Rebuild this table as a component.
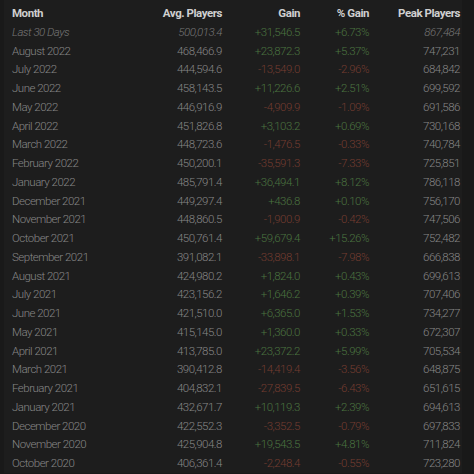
type Row = {
    month: string;
    avg: string;
    gain: string;
    pct: string;
    peak: string;
};

const rows: Row[] = [
    { month: "Last 30 Days", avg: "500,013.4", gain: "+31,546.5", pct: "+6.73%", peak: "867,484" },
    { month: "August 2022", avg: "468,466.9", gain: "+23,872.3", pct: "+5.37%", peak: "747,231" },
    { month: "July 2022", avg: "444,594.6", gain: "-13,549.0", pct: "-2.96%", peak: "684,842" },
    { month: "June 2022", avg: "458,143.5", gain: "+11,226.6", pct: "+2.51%", peak: "699,592" },
    { month: "May 2022", avg: "446,916.9", gain: "-4,909.9", pct: "-1.09%", peak: "691,586" },
    { month: "April 2022", avg: "451,826.8", gain: "+3,103.2", pct: "+0.69%", peak: "730,168" },
    { month: "March 2022", avg: "448,723.6", gain: "-1,476.5", pct: "-0.33%", peak: "740,784" },
    { month: "February 2022", avg: "450,200.1", gain: "-35,591.3", pct: "-7.33%", peak: "725,851" },
    { month: "January 2022", avg: "485,791.4", gain: "+36,494.1", pct: "+8.12%", peak: "786,118" },
    { month: "December 2021", avg: "449,297.4", gain: "+436.8", pct: "+0.10%", peak: "756,170" },
    { month: "November 2021", avg: "448,860.5", gain: "-1,900.9", pct: "-0.42%", peak: "747,506" },
    { month: "October 2021", avg: "450,761.4", gain: "+59,679.4", pct: "+15.26%", peak: "752,482" },
    { month: "September 2021", avg: "391,082.1", gain: "-33,898.1", pct: "-7.98%", peak: "666,838" },
    { month: "August 2021", avg: "424,980.2", gain: "+1,824.0", pct: "+0.43%", peak: "699,613" },
    { month: "July 2021", avg: "423,156.2", gain: "+1,646.2", pct: "+0.39%", peak: "707,406" },
    { month: "June 2021", avg: "421,510.0", gain: "+6,365.0", pct: "+1.53%", peak: "734,277" },
    { month: "May 2021", avg: "415,145.0", gain: "+1,360.0", pct: "+0.33%", peak: "672,307" },
    { month: "April 2021", avg: "413,785.0", gain: "+23,372.2", pct: "+5.99%", peak: "705,534" },
    { month: "March 2021", avg: "390,412.8", gain: "-14,419.4", pct: "-3.56%", peak: "648,875" },
    { month: "February 2021", avg: "404,832.1", gain: "-27,839.5", pct: "-6.43%", peak: "651,615" },
    { month: "January 2021", avg: "432,671.7", gain: "+10,119.3", pct: "+2.39%", peak: "694,613" },
    { month: "December 2020", avg: "422,552.3", gain: "-3,352.5", pct: "-0.79%", peak: "697,833" },
    { month: "November 2020", avg: "425,904.8", gain: "+19,543.5", pct: "+4.81%", peak: "711,824" },
    { month: "October 2020", avg: "406,361.4", gain: "-2,248.4", pct: "-0.55%", peak: "723,280" },
];

const cols = "grid grid-cols-[140px_70px_78px_69px_91px] items-center";

const App = () => {
    return (
        <div className="h-[474px] w-[474px] overflow-hidden bg-[#191919] font-['Roboto',sans-serif]">
            <div className="ml-[4px] w-[458px] bg-[#1d1d1d] pl-[8px] pt-[4px]">
                {/* header */}
                <div className={`${cols} h-[19px] text-[11.5px] font-bold tracking-[-0.45px] text-[#cfcfcf]`}>
                    <div>Month</div>
                    <div className="text-right">Avg. Players</div>
                    <div className="text-right">Gain</div>
                    <div className="text-right">% Gain</div>
                    <div className="text-right">Peak Players</div>
                </div>

                {rows.map((r, i) => {
                    const up = r.gain.startsWith("+");
                    const color = up ? "text-[#4b7440]" : "text-[#743c30]";
                    const first = i === 0 ? "italic text-[#767676]" : "";
                    return (
                        <div
                            key={r.month}
                            className={`${cols} h-[18.75px] text-[11.5px] font-light tracking-[-0.5px] text-[#878787]`}
                        >
                            <div className={first}>{r.month}</div>
                            <div className={`text-right ${first}`}>{r.avg}</div>
                            <div className={`text-right ${color}`}>{r.gain}</div>
                            <div className={`text-right ${color}`}>{r.pct}</div>
                            <div className={`text-right ${first}`}>{r.peak}</div>
                        </div>
                    );
                })}
            </div>
        </div>
    );
};

export default App;
